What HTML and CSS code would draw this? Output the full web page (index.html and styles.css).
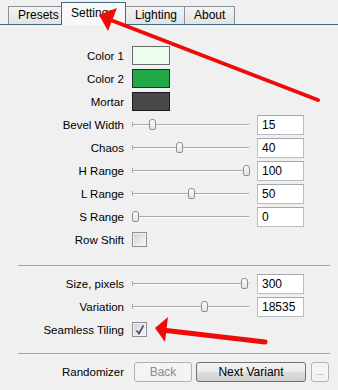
FILE: index.html
```html
<!DOCTYPE html>
<html>
<head>
<meta charset="utf-8">
<link rel="stylesheet" href="styles.css">
</head>
<body>
<div class="tabs">
  <div class="tab">Presets</div>
  <div class="tab active">Settings</div>
  <div class="tab">Lighting</div>
  <div class="tab">About</div>
</div>
<div class="panel">
  <div class="row"><span class="label">Color 1</span><span class="swatch c1"></span></div>
  <div class="row"><span class="label">Color 2</span><span class="swatch c2"></span></div>
  <div class="row"><span class="label">Mortar</span><span class="swatch c3"></span></div>
  <div class="row"><span class="label">Bevel Width</span><div class="slider"><span class="thumb" style="left:17px"></span></div><span class="input">15</span></div>
  <div class="row"><span class="label">Chaos</span><div class="slider"><span class="thumb" style="left:44px"></span></div><span class="input">40</span></div>
  <div class="row"><span class="label">H Range</span><div class="slider"><span class="thumb" style="left:111px"></span></div><span class="input">100</span></div>
  <div class="row"><span class="label">L Range</span><div class="slider"><span class="thumb" style="left:56px"></span></div><span class="input">50</span></div>
  <div class="row"><span class="label">S Range</span><div class="slider"><span class="thumb" style="left:0px"></span></div><span class="input">0</span></div>
  <div class="row"><span class="label">Row Shift</span><span class="check"></span></div>
  <div class="sep sep1"></div>
  <div class="row"><span class="label">Size, pixels</span><div class="slider"><span class="thumb" style="left:109px"></span></div><span class="input">300</span></div>
  <div class="row"><span class="label">Variation</span><div class="slider"><span class="thumb" style="left:69px"></span></div><span class="input">18535</span></div>
  <div class="row"><span class="label">Seamless Tiling</span><span class="check checked"><svg width="12" height="12" viewBox="0 0 12 12"><path d="M2.5 6.5 L5 9.5 L9.5 1.5" fill="none" stroke="#3d4f6b" stroke-width="1.6"/></svg></span></div>
  <div class="sep sep2"></div>
  <div class="row buttons"><span class="label">Randomizer</span><span class="btn disabled back">Back</span><span class="btn next">Next Variant</span><span class="btn disabled more">...</span></div>
</div>
<svg class="arrows" width="338" height="390" viewBox="0 0 338 390">
  <line x1="318" y1="100" x2="108" y2="19" stroke="#f00a0a" stroke-width="4" stroke-linecap="round"/>
  <polygon points="99,15 117,8 108,31" fill="#f00a0a"/>
  <line x1="265" y1="342" x2="162" y2="330" stroke="#f00a0a" stroke-width="5" stroke-linecap="round"/>
  <polygon points="155,328 168,317 165,342" fill="#f00a0a"/>
</svg>
</body>
</html>
```
FILE: styles.css
```css
html, body {
  margin: 0;
  padding: 0;
}
body {
  width: 338px;
  height: 390px;
  background: #f0f0f0;
  font-family: "Liberation Sans", Arial, sans-serif;
  font-size: 11.5px;
  color: #000;
  position: relative;
  overflow: hidden;
}
.tabs {
  display: flex;
  align-items: flex-end;
  height: 24px;
  padding-left: 8px;
  border-bottom: 1px solid #3f6b83;
}
.tab {
  height: 17px;
  line-height: 16px;
  padding: 0 8px 0 9px;
  border: 1px solid #8b8e96;
  border-bottom: none;
  background: linear-gradient(#f4f4f4, #e2e2e2);
  font-size: 12px;
  margin-right: -1px;
}
.tab:nth-child(1) { width: 35px; }
.tab:nth-child(3) { width: 41px; }
.tab:nth-child(4) { width: 32px; }
.tab.active {
  position: relative;
  height: 22px;
  line-height: 20px;
  margin-bottom: -1px;
  width: 46px;
  background: #f8f8f8;
  border-color: #3f6b83;
  z-index: 1;
}
.panel {
  padding-top: 19px;
}
.row {
  display: flex;
  align-items: center;
  height: 23px;
}
.label {
  width: 132px;
  box-sizing: border-box;
  padding-right: 8px;
  text-align: right;
  flex-shrink: 0;
}
.swatch {
  width: 38px;
  height: 19px;
  box-sizing: border-box;
  border: 1px solid #2a2a2a;
}
.c1 { background: #ebfded; border-color: #6b6b6b; }
.c2 { background: #21a745; }
.c3 { background: #484848; border-color: #1a1a1a; }
.slider {
  position: relative;
  width: 117px;
  height: 12px;
  margin-right: 8px;
}
.slider::before {
  content: "";
  position: absolute;
  left: 0;
  right: 0;
  top: 5px;
  border-top: 1px solid #a8a8a8;
  border-bottom: 1px solid #fcfcfc;
}
.slider::after {
  content: "";
  position: absolute;
  left: 0;
  top: 3px;
  width: 1px;
  height: 5px;
  background: #a8a8a8;
}
.thumb {
  position: absolute;
  top: 0;
  width: 7px;
  height: 11px;
  box-sizing: border-box;
  border: 1px solid #8d8f93;
  border-radius: 3px 3px 2px 2px;
  background: linear-gradient(#fdfdfd, #e2e2e2);
  z-index: 1;
}
.input {
  width: 47px;
  height: 20px;
  box-sizing: border-box;
  border: 1px solid #b8bcc4;
  border-top-color: #a3a7ae;
  background: #fff;
  padding-left: 4px;
  line-height: 18px;
  font-size: 12px;
}
.check {
  width: 15px;
  height: 15px;
  box-sizing: border-box;
  border: 1px solid #8e8f8f;
  background: linear-gradient(135deg, #d2d2d2, #f8f8f8);
  box-shadow: inset 0 0 0 1px #f4f4f4;
  display: flex;
  align-items: center;
  justify-content: center;
}
.sep {
  margin-left: 18px;
  margin-right: 8px;
  border-top: 1px solid #a3a3a3;
}
.sep1 { margin-top: 14px; margin-bottom: 6px; }
.sep2 { margin-top: 12px; margin-bottom: 6px; }
.btn {
  height: 20px;
  box-sizing: border-box;
  border: 1px solid #707070;
  border-radius: 3px;
  background: linear-gradient(#f3f3f3 0%, #ebebeb 48%, #dddddd 52%, #cfcfcf 100%);
  display: flex;
  align-items: center;
  justify-content: center;
  font-size: 12px;
}
.btn.disabled {
  border-color: #adb2b5;
  background: #f4f4f4;
  color: #8a8a8a;
}
.back { width: 58px; margin-left: 2px; margin-right: 4px; }
.next { width: 110px; margin-right: 5px; }
.more { width: 18px; font-size: 9px; }
.arrows {
  position: absolute;
  left: 0;
  top: 0;
  pointer-events: none;
  z-index: 5;
}
```
